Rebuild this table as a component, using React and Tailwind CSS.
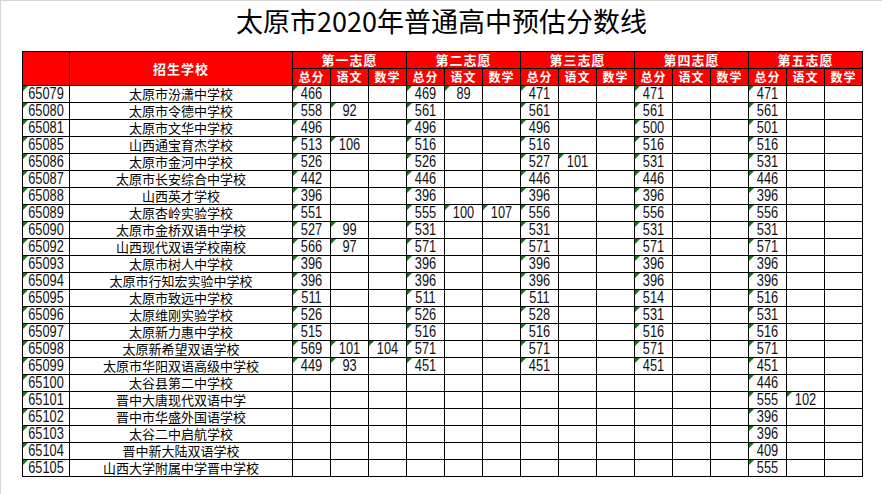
const rows = [
  ["65079", "太原市汾潇中学校", ["466", "", "", "469", "89", "", "471", "", "", "471", "", "", "471", "", ""]],
  ["65080", "太原市令德中学校", ["558", "92", "", "561", "", "", "561", "", "", "561", "", "", "561", "", ""]],
  ["65081", "太原市文华中学校", ["496", "", "", "496", "", "", "496", "", "", "500", "", "", "501", "", ""]],
  ["65085", "山西通宝育杰学校", ["513", "106", "", "516", "", "", "516", "", "", "516", "", "", "516", "", ""]],
  ["65086", "太原市金河中学校", ["526", "", "", "526", "", "", "527", "101", "", "531", "", "", "531", "", ""]],
  ["65087", "太原市长安综合中学校", ["442", "", "", "446", "", "", "446", "", "", "446", "", "", "446", "", ""]],
  ["65088", "山西英才学校", ["396", "", "", "396", "", "", "396", "", "", "396", "", "", "396", "", ""]],
  ["65089", "太原杏岭实验学校", ["551", "", "", "555", "100", "107", "556", "", "", "556", "", "", "556", "", ""]],
  ["65090", "太原市金桥双语中学校", ["527", "99", "", "531", "", "", "531", "", "", "531", "", "", "531", "", ""]],
  ["65092", "山西现代双语学校南校", ["566", "97", "", "571", "", "", "571", "", "", "571", "", "", "571", "", ""]],
  ["65093", "太原市树人中学校", ["396", "", "", "396", "", "", "396", "", "", "396", "", "", "396", "", ""]],
  ["65094", "太原市行知宏实验中学校", ["396", "", "", "396", "", "", "396", "", "", "396", "", "", "396", "", ""]],
  ["65095", "太原市致远中学校", ["511", "", "", "511", "", "", "511", "", "", "514", "", "", "516", "", ""]],
  ["65096", "太原维刚实验学校", ["526", "", "", "526", "", "", "528", "", "", "531", "", "", "531", "", ""]],
  ["65097", "太原新力惠中学校", ["515", "", "", "516", "", "", "516", "", "", "516", "", "", "516", "", ""]],
  ["65098", "太原新希望双语学校", ["569", "101", "104", "571", "", "", "571", "", "", "571", "", "", "571", "", ""]],
  ["65099", "太原市华阳双语高级中学校", ["449", "93", "", "451", "", "", "451", "", "", "451", "", "", "451", "", ""]],
  ["65100", "太谷县第二中学校", ["", "", "", "", "", "", "", "", "", "", "", "", "446", "", ""]],
  ["65101", "晋中大唐现代双语中学", ["", "", "", "", "", "", "", "", "", "", "", "", "555", "102", ""]],
  ["65102", "晋中市华盛外国语学校", ["", "", "", "", "", "", "", "", "", "", "", "", "396", "", ""]],
  ["65103", "太谷二中启航学校", ["", "", "", "", "", "", "", "", "", "", "", "", "396", "", ""]],
  ["65104", "晋中新大陆双语学校", ["", "", "", "", "", "", "", "", "", "", "", "", "409", "", ""]],
  ["65105", "山西大学附属中学晋中学校", ["", "", "", "", "", "", "", "", "", "", "", "", "555", "", ""]],
];

const groups = ["第一志愿", "第二志愿", "第三志愿", "第四志愿", "第五志愿"];
const subs = ["总分", "语文", "数学"];

// little green corner Excel puts on numbers stored as text
function Flag() {
  return (
    <span className="absolute left-0 top-0 w-0 h-0 border-t-[5px] border-r-[5px] border-t-[#0a7d12] border-r-transparent"></span>
  );
}

// narrow-looking digits, like Arial Narrow in the sheet
function Num({ children }) {
  return (
    <span
      className="block h-[16px] scale-x-[0.8] origin-center text-[16px] leading-[16px] text-[#111] whitespace-nowrap"
      style={{ fontFamily: '"Liberation Sans", Arial, sans-serif' }}
    >
      {children}
    </span>
  );
}

function App() {
  const cjk = { fontFamily: '"Noto Sans CJK SC", sans-serif' };

  return (
    <div className="w-[882px] h-[494px] bg-white border-t border-l border-[#d6d6d6] overflow-hidden">
      <div className="h-[50px] pt-[6px] text-center text-[27px] leading-[27px] text-black" style={cjk}>
        太原市2020年普通高中预估分数线
      </div>
      <table className="ml-[21px] table-fixed border-collapse w-[841px]">
        <colgroup>
          <col className="w-[47px]" />
          <col className="w-[223px]" />
          {Array.from({ length: 15 }).map((_, i) => (
            <col key={i} className="w-[38px]" />
          ))}
        </colgroup>
        <thead>
          <tr className="h-[17px]">
            <th rowSpan={2} className="bg-[#ff0000] border border-black p-0"></th>
            <th
              rowSpan={2}
              className="bg-[#ff0000] border border-black p-0 text-white text-[13px] font-bold tracking-[1px]"
              style={cjk}
            >
              招生学校
            </th>
            {groups.map((g) => (
              <th
                key={g}
                colSpan={3}
                className="bg-[#ff0000] border border-black p-0 text-white text-[13px] leading-[16px] font-bold tracking-[1px]"
                style={cjk}
              >
                {g}
              </th>
            ))}
          </tr>
          <tr className="h-[17px]">
            {groups.map((g) =>
              subs.map((s) => (
                <th
                  key={g + s}
                  className="bg-[#ff0000] border border-black p-0 text-white text-[12px] leading-[16px] font-bold tracking-[1px]"
                  style={cjk}
                >
                  {s}
                </th>
              ))
            )}
          </tr>
        </thead>
        <tbody>
          {rows.map(([code, name, vals]) => (
            <tr key={code} className="h-[17px]">
              <td className="relative border border-black p-0 text-center">
                <Flag />
                <Num>{code}</Num>
              </td>
              <td
                className="border border-black p-0 text-center text-[13px] leading-[16px] text-black whitespace-nowrap"
                style={cjk}
              >
                {name}
              </td>
              {vals.map((v, i) => (
                <td key={i} className="relative border border-black p-0 text-center">
                  {v && <Flag />}
                  {v && <Num>{v}</Num>}
                </td>
              ))}
            </tr>
          ))}
        </tbody>
      </table>
    </div>
  );
}

export default App;
